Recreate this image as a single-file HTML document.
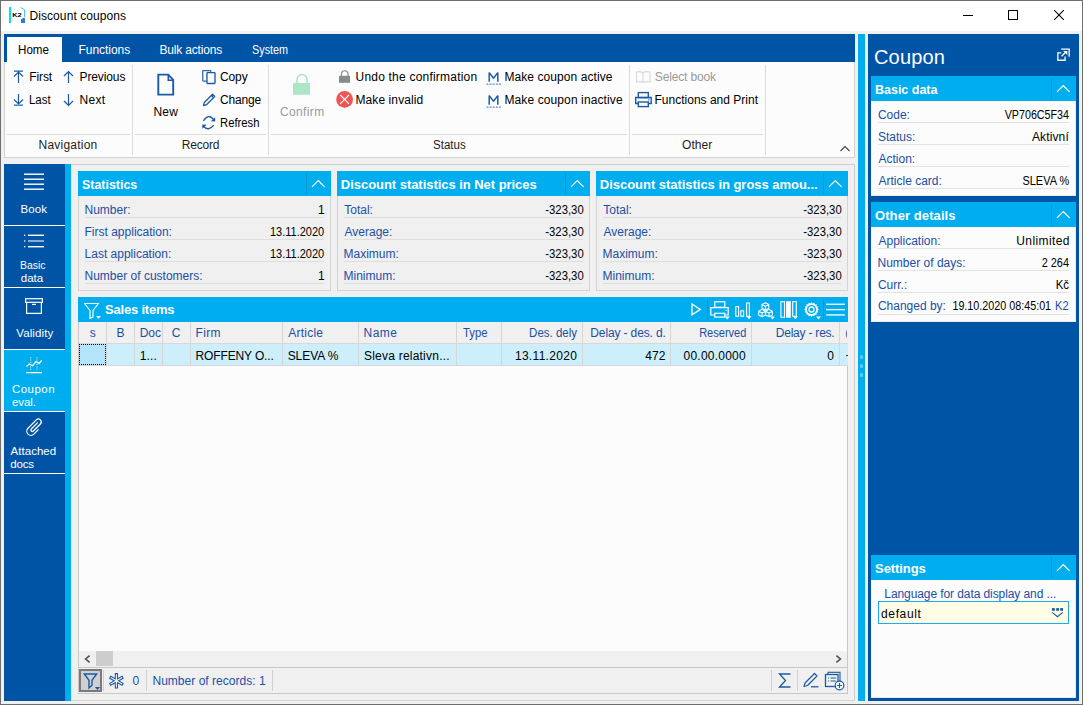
<!DOCTYPE html>
<html><head><meta charset="utf-8"><title>Discount coupons</title>
<style>
html,body{margin:0;padding:0;width:1083px;height:705px;overflow:hidden;background:#f0f0f0;}
body{position:relative;font-family:"Liberation Sans",sans-serif;}
body>div,body>svg{position:absolute;}
.t{white-space:nowrap;}
</style></head><body>
<div style="left:0px;top:0px;width:1083px;height:705px;background:#f0f0f0;"></div>
<div style="left:1px;top:1px;width:1081px;height:30px;background:#ffffff;"></div>
<div style="left:0px;top:0px;width:1083px;height:1px;background:#6e6e6e;"></div>
<div style="left:0px;top:704px;width:1083px;height:1px;background:#6e6e6e;"></div>
<div style="left:0px;top:0px;width:1px;height:705px;background:#6e6e6e;"></div>
<div style="left:1082px;top:0px;width:1px;height:705px;background:#6e6e6e;"></div>
<svg style="left:8px;top:6px;" width="20" height="20" viewBox="0 0 20 20"><rect x="1" y="1" width="2" height="16" fill="#00e4f2"/><text x="4.2" y="10.9" font-family="Liberation Sans" font-weight="700" font-size="6.2" fill="#000" textLength="9.4" lengthAdjust="spacingAndGlyphs">K2</text><path d="M12.5 1.5 L16.5 3.8 L16.5 11" stroke="#3ccbe6" stroke-width="1" fill="none"/><path d="M13 17 L13 13.5 Q15 11 17 12 L17 17 Z" fill="#2a7be0"/></svg>
<div class="t" style="left:29.44px;top:9.00px;font-size:12px;line-height:14px;font-weight:400;color:#000;letter-spacing:0.085px;">Discount coupons</div>
<div style="left:963px;top:15px;width:10px;height:1px;background:#000;"></div>
<div style="left:1008px;top:10px;width:10px;height:10px;border:1px solid #000;box-sizing:border-box;"></div>
<svg style="left:1053px;top:9px;" width="12" height="12" viewBox="0 0 12 12"><path d="M1.2 1.2 L10.8 10.8 M10.8 1.2 L1.2 10.8" stroke="#000" stroke-width="1.05"/></svg>
<div style="left:4px;top:34px;width:851px;height:28px;background:#0054a6;"></div>
<div style="left:7px;top:37px;width:55px;height:25px;background:#fcfcfc;"></div>
<div class="t" style="left:18.04px;top:43.00px;font-size:12px;line-height:14px;font-weight:400;color:#000;transform:scaleX(0.9678);transform-origin:left center;margin-left:0.03px;">Home</div>
<div class="t" style="left:78.54px;top:43.00px;font-size:12px;line-height:14px;font-weight:400;color:#fff;letter-spacing:-0.042px;">Functions</div>
<div class="t" style="left:159.44px;top:43.00px;font-size:12px;line-height:14px;font-weight:400;color:#fff;letter-spacing:-0.173px;">Bulk actions</div>
<div class="t" style="left:251.76px;top:43.00px;font-size:12px;line-height:14px;font-weight:400;color:#fff;transform:scaleX(0.9018);transform-origin:left center;margin-left:0.05px;">System</div>
<div style="left:4px;top:62px;width:851px;height:96px;background:#fcfcfc;border:1px solid #d2d2d2;border-top:none;box-sizing:border-box;"></div>
<div style="left:7px;top:134px;width:123px;height:1px;background:#dcdcdc;"></div>
<div style="left:135px;top:134px;width:131px;height:1px;background:#dcdcdc;"></div>
<div style="left:271px;top:134px;width:356px;height:1px;background:#dcdcdc;"></div>
<div style="left:632px;top:134px;width:131px;height:1px;background:#dcdcdc;"></div>
<div style="left:132px;top:65px;width:1px;height:90px;background:#dcdcdc;"></div>
<div style="left:268px;top:65px;width:1px;height:90px;background:#dcdcdc;"></div>
<div style="left:629px;top:65px;width:1px;height:90px;background:#dcdcdc;"></div>
<div style="left:765px;top:65px;width:1px;height:90px;background:#dcdcdc;"></div>
<div class="t" style="left:38.54px;top:137.70px;font-size:12px;line-height:14px;font-weight:400;color:#1e1e1e;letter-spacing:0.227px;">Navigation</div>
<div class="t" style="left:181.74px;top:137.60px;font-size:12px;line-height:14px;font-weight:400;color:#1e1e1e;letter-spacing:-0.212px;">Record</div>
<div class="t" style="left:432.66px;top:137.80px;font-size:12px;line-height:14px;font-weight:400;color:#1e1e1e;transform:scaleX(0.9619);transform-origin:left center;margin-left:0.02px;">Status</div>
<div class="t" style="left:682.06px;top:137.50px;font-size:12px;line-height:14px;font-weight:400;color:#1e1e1e;letter-spacing:0.030px;">Other</div>
<svg style="left:839px;top:143.5px;" width="12" height="9" viewBox="0 0 12 9"><path d="M1.5 7 L6 2.5 L10.5 7" stroke="#444" stroke-width="1.1" fill="none"/></svg>
<svg style="left:13px;top:70px;" width="11" height="14" viewBox="0 0 11 14"><path d="M1 1.2 H10 M5.5 2.5 V13 M1 6.5 L5.5 2 L10 6.5" stroke="#1c5aa6" stroke-width="1.2" fill="none"/></svg>
<svg style="left:63px;top:70px;" width="11" height="14" viewBox="0 0 11 14"><path d="M5.5 1.5 V13 M1 6 L5.5 1.5 L10 6" stroke="#1c5aa6" stroke-width="1.2" fill="none"/></svg>
<svg style="left:13px;top:93px;" width="11" height="14" viewBox="0 0 11 14"><path d="M5.5 1 V11 M1 6.5 L5.5 11 L10 6.5" stroke="#1c5aa6" stroke-width="1.2" fill="none"/><path d="M1 12.2 H10" stroke="#4f86c6" stroke-width="1.6"/></svg>
<svg style="left:63px;top:93px;" width="11" height="14" viewBox="0 0 11 14"><path d="M5.5 1 V12.5 M1 8 L5.5 12.5 L10 8" stroke="#1c5aa6" stroke-width="1.2" fill="none"/></svg>
<div class="t" style="left:29.34px;top:70.00px;font-size:12px;line-height:14px;font-weight:400;color:#000;letter-spacing:-0.140px;">First</div>
<div class="t" style="left:79.54px;top:70.00px;font-size:12px;line-height:14px;font-weight:400;color:#000;letter-spacing:-0.114px;">Previous</div>
<div class="t" style="left:29.34px;top:93.00px;font-size:12px;line-height:14px;font-weight:400;color:#000;transform:scaleX(0.9537);transform-origin:left center;margin-left:0.04px;">Last</div>
<div class="t" style="left:79.54px;top:93.00px;font-size:12px;line-height:14px;font-weight:400;color:#000;letter-spacing:0.253px;">Next</div>
<svg style="left:156px;top:73px;" width="20" height="24" viewBox="0 0 20 24"><path d="M2.3 1.6 H12.2 L17.2 6.8 V21.6 H2.3 Z" stroke="#1c5aa6" stroke-width="1.9" fill="none" stroke-linejoin="miter"/><path d="M12.3 2 V7.2 H17" stroke="#1c5aa6" stroke-width="1.6" fill="none"/></svg>
<div class="t" style="left:153.44px;top:104.60px;font-size:12px;line-height:14px;font-weight:400;color:#000;letter-spacing:0.250px;">New</div>
<svg style="left:201px;top:69px;" width="16" height="16" viewBox="0 0 16 16"><rect x="1.75" y="1.55" width="8" height="10.5" rx="0.5" stroke="#1c5aa6" stroke-width="1.3" fill="none" opacity="0.9"/><rect x="5.95" y="3.55" width="8.05" height="10.9" rx="0.6" stroke="#1c5aa6" stroke-width="1.35" fill="#fcfcfc"/></svg>
<div class="t" style="left:219.90px;top:70.00px;font-size:12px;line-height:14px;font-weight:400;color:#000;letter-spacing:-0.073px;">Copy</div>
<svg style="left:201px;top:92px;" width="16" height="16" viewBox="0 0 16 16"><path d="M2.5 13.5 L3.3 10.5 L11.5 2.3 L13.7 4.5 L5.5 12.7 Z M10.3 3.5 L12.5 5.7" stroke="#1c5aa6" stroke-width="1.3" fill="none" stroke-linejoin="round"/></svg>
<div class="t" style="left:219.90px;top:93.00px;font-size:12px;line-height:14px;font-weight:400;color:#000;letter-spacing:-0.132px;">Change</div>
<svg style="left:201px;top:115px;" width="16" height="16" viewBox="0 0 16 16"><path d="M2.3 5.9 Q7.5 -2.1 12.6 4.6" stroke="#1c5aa6" stroke-width="1.35" fill="none"/><path d="M14.2 2.2 L14.2 6.6 L9.8 6.3 Z" fill="#1c5aa6"/><path d="M12.7 10.1 Q7.5 16.8 2.4 11.3" stroke="#1c5aa6" stroke-width="1.35" fill="none"/><path d="M1.3 13.8 L1.3 9.4 L5.7 9.7 Z" fill="#1c5aa6"/></svg>
<div class="t" style="left:219.54px;top:116.00px;font-size:12px;line-height:14px;font-weight:400;color:#000;transform:scaleX(0.9389);transform-origin:left center;margin-left:0.06px;">Refresh</div>
<svg style="left:292px;top:73px;" width="20" height="24" viewBox="0 0 20 24"><path d="M5 10 V6.5 A5 5 0 0 1 15 6.5 V10" stroke="#ade5c7" stroke-width="1.6" fill="none"/><rect x="1" y="10" width="17" height="11.8" fill="#ade5c7"/></svg>
<div class="t" style="left:280.00px;top:105.00px;font-size:12px;line-height:14px;font-weight:400;color:#9a9a9a;letter-spacing:0.370px;">Confirm</div>
<svg style="left:338px;top:69px;" width="14" height="15" viewBox="0 0 14 15"><path d="M3.5 7 V4.5 A3.3 3.3 0 0 1 10 4.5 V7" stroke="#868b8b" stroke-width="1.2" fill="none"/><rect x="1" y="6.8" width="11" height="7" fill="#868b8b"/></svg>
<div class="t" style="left:355.50px;top:70.00px;font-size:12px;line-height:14px;font-weight:400;color:#000;letter-spacing:0.211px;">Undo the confirmation</div>
<svg style="left:335px;top:90px;" width="19" height="19" viewBox="0 0 19 19"><circle cx="9.6" cy="9.4" r="8.4" fill="#f05454"/><path d="M5.2 5 L14 13.8 M14 5 L5.2 13.8" stroke="#fff" stroke-width="1.1"/></svg>
<div class="t" style="left:355.44px;top:93.00px;font-size:12px;line-height:14px;font-weight:400;color:#000;letter-spacing:0.098px;">Make invalid</div>
<svg style="left:486px;top:70px;" width="16" height="16" viewBox="0 0 16 16"><path d="M3.2 11.8 V2.6 L7.5 8.3 L11.8 2.6 V11.8" stroke="#1c5aa6" stroke-width="1.5" fill="none" stroke-linejoin="bevel"/><rect x="0.5" y="13.5" width="2" height="1.3" fill="#5b8fd0"/><rect x="3.6" y="13.5" width="2" height="1.3" fill="#5b8fd0"/><rect x="6.7" y="13.5" width="2" height="1.3" fill="#5b8fd0"/><rect x="9.8" y="13.5" width="2" height="1.3" fill="#5b8fd0"/><rect x="12.9" y="13.5" width="2" height="1.3" fill="#5b8fd0"/></svg>
<svg style="left:486px;top:93px;" width="16" height="16" viewBox="0 0 16 16"><path d="M3.2 11.8 V2.6 L7.5 8.3 L11.8 2.6 V11.8" stroke="#1c5aa6" stroke-width="1.5" fill="none" stroke-linejoin="bevel"/><rect x="0.5" y="13.5" width="2" height="1.3" fill="#5b8fd0"/><rect x="3.6" y="13.5" width="2" height="1.3" fill="#5b8fd0"/><rect x="6.7" y="13.5" width="2" height="1.3" fill="#5b8fd0"/><rect x="9.8" y="13.5" width="2" height="1.3" fill="#5b8fd0"/><rect x="12.9" y="13.5" width="2" height="1.3" fill="#5b8fd0"/></svg>
<div class="t" style="left:504.44px;top:70.00px;font-size:12px;line-height:14px;font-weight:400;color:#000;letter-spacing:0.080px;">Make coupon active</div>
<div class="t" style="left:504.44px;top:93.00px;font-size:12px;line-height:14px;font-weight:400;color:#000;letter-spacing:0.108px;">Make coupon inactive</div>
<svg style="left:635px;top:70px;" width="17" height="14" viewBox="0 0 17 14"><path d="M1.5 2 Q4.5 1 8 2.5 Q11.5 1 15 2 V12 Q11.5 11 8 12.5 Q4.5 11 1.5 12 Z M8 2.5 V12.5" stroke="#d9d9d9" stroke-width="1.1" fill="none"/></svg>
<div class="t" style="left:654.86px;top:70.00px;font-size:12px;line-height:14px;font-weight:400;color:#9a9a9a;letter-spacing:-0.156px;">Select book</div>
<svg style="left:634px;top:91px;" width="19" height="17" viewBox="0 0 19 17"><rect x="4.3" y="1.6" width="10" height="5" stroke="#1c5aa6" stroke-width="1.4" fill="none"/><path d="M4 12.5 H1.7 V6.5 H17.2 V12.5 H15" stroke="#1c5aa6" stroke-width="1.4" fill="none"/><rect x="4.3" y="11" width="10" height="4.6" stroke="#1c5aa6" stroke-width="1.4" fill="#fcfcfc"/><rect x="14.2" y="8.3" width="1.2" height="1.2" fill="#1c5aa6"/></svg>
<div class="t" style="left:654.44px;top:93.00px;font-size:12px;line-height:14px;font-weight:400;color:#000;letter-spacing:0.013px;">Functions and Print</div>
<div style="left:858px;top:34px;width:7px;height:667px;background:#00aeef;"></div>
<div style="left:860px;top:355.3px;width:3.4px;height:3.4px;border-radius:50%;background:#5fcdf5;"></div>
<div style="left:860px;top:364.3px;width:3.4px;height:3.4px;border-radius:50%;background:#5fcdf5;"></div>
<div style="left:860px;top:373.3px;width:3.4px;height:3.4px;border-radius:50%;background:#5fcdf5;"></div>
<div style="left:868px;top:34px;width:211px;height:667px;background:#0054a6;"></div>
<div class="t" style="left:874.00px;top:46.00px;font-size:20px;line-height:22px;font-weight:400;color:#fff;letter-spacing:0.160px;">Coupon</div>
<svg style="left:1052px;top:44px;" width="22" height="22" viewBox="0 0 22 22"><path d="M9.2 8.95 H5.85 V16.25 H13.1 V12.6" stroke="#fff" stroke-width="1.3" fill="none"/><path d="M9.2 5.15 H17.15 V12.8" stroke="#fff" stroke-width="1.3" fill="none"/><path d="M9.6 12.3 L13.6 8.3" stroke="#fff" stroke-width="1.3"/><path d="M11.2 6.9 H15.3 V11 Z" fill="#fff"/></svg>
<div style="left:871px;top:76px;width:205px;height:25px;background:#00aeef;"></div>
<div style="left:1051px;top:78px;width:1px;height:21px;background:#0b97d0;"></div>
<svg style="left:1056px;top:84px;" width="15" height="9" viewBox="0 0 15 9"><path d="M1 7.8 L7.3 1.5 L13.6 7.8" stroke="#fff" stroke-width="1.2" fill="none"/></svg>
<div class="t" style="left:874.65px;top:81.80px;font-size:13px;line-height:15px;font-weight:700;color:#fff;transform:scaleX(0.9598);transform-origin:left center;margin-left:0.03px;">Basic data</div>
<div style="left:871px;top:101px;width:205px;height:95px;background:#fcfcfc;border-right:1px solid #ebebeb;border-bottom:1px solid #ebebeb;box-sizing:border-box;"></div>
<div class="t" style="left:877.90px;top:108.00px;font-size:12px;line-height:14px;font-weight:400;color:#1b4fa5;">Code:</div>
<div class="t" style="right:13.96px;top:108.00px;font-size:12px;line-height:14px;font-weight:400;color:#000;text-align:right;transform:scaleX(0.8934);transform-origin:right center;margin-right:0.04px;">VP706C5F34</div>
<div style="left:878px;top:122px;width:191px;height:1px;background:#e3e3e3;"></div>
<div class="t" style="left:877.96px;top:130.00px;font-size:12px;line-height:14px;font-weight:400;color:#1b4fa5;">Status:</div>
<div class="t" style="right:14.17px;top:130.00px;font-size:12px;line-height:14px;font-weight:400;color:#000;text-align:right;letter-spacing:0.117px;">Aktivní</div>
<div style="left:878px;top:144px;width:191px;height:1px;background:#e3e3e3;"></div>
<div class="t" style="left:878.50px;top:152.00px;font-size:12px;line-height:14px;font-weight:400;color:#1b4fa5;">Action:</div>
<div style="left:878px;top:166px;width:191px;height:1px;background:#e3e3e3;"></div>
<div class="t" style="left:878.50px;top:174.00px;font-size:12px;line-height:14px;font-weight:400;color:#1b4fa5;">Article card:</div>
<div class="t" style="right:13.92px;top:174.00px;font-size:12px;line-height:14px;font-weight:400;color:#000;text-align:right;transform:scaleX(0.9140);transform-origin:right center;margin-right:0.03px;">SLEVA %</div>
<div style="left:878px;top:188px;width:191px;height:1px;background:#e3e3e3;"></div>
<div style="left:871px;top:202px;width:205px;height:25px;background:#00aeef;"></div>
<div style="left:1051px;top:204px;width:1px;height:21px;background:#0b97d0;"></div>
<svg style="left:1056px;top:210px;" width="15" height="9" viewBox="0 0 15 9"><path d="M1 7.8 L7.3 1.5 L13.6 7.8" stroke="#fff" stroke-width="1.2" fill="none"/></svg>
<div class="t" style="left:874.98px;top:207.80px;font-size:13px;line-height:15px;font-weight:700;color:#fff;letter-spacing:0.092px;">Other details</div>
<div style="left:871px;top:227px;width:205px;height:95px;background:#fcfcfc;border-right:1px solid #ebebeb;border-bottom:1px solid #ebebeb;box-sizing:border-box;"></div>
<div class="t" style="left:878.50px;top:234.00px;font-size:12px;line-height:14px;font-weight:400;color:#1b4fa5;">Application:</div>
<div class="t" style="right:13.20px;top:234.00px;font-size:12px;line-height:14px;font-weight:400;color:#000;text-align:right;letter-spacing:0.388px;">Unlimited</div>
<div style="left:878px;top:248px;width:191px;height:1px;background:#e3e3e3;"></div>
<div class="t" style="left:877.54px;top:255.80px;font-size:12px;line-height:14px;font-weight:400;color:#1b4fa5;">Number of days:</div>
<div class="t" style="right:14.01px;top:255.80px;font-size:12px;line-height:14px;font-weight:400;color:#000;text-align:right;transform:scaleX(0.9125);transform-origin:right center;margin-right:0.03px;">2 264</div>
<div style="left:878px;top:270px;width:191px;height:1px;background:#e3e3e3;"></div>
<div class="t" style="left:877.90px;top:277.60px;font-size:12px;line-height:14px;font-weight:400;color:#1b4fa5;">Curr.:</div>
<div class="t" style="right:14.08px;top:277.60px;font-size:12px;line-height:14px;font-weight:400;color:#000;text-align:right;transform:scaleX(0.9513);transform-origin:right center;margin-right:0.02px;">Kč</div>
<div style="left:878px;top:292px;width:191px;height:1px;background:#e3e3e3;"></div>
<div class="t" style="left:877.90px;top:299.40px;font-size:12px;line-height:14px;font-weight:400;color:#1b4fa5;">Changed by:</div>
<div style="left:878px;top:314px;width:191px;height:1px;background:#e3e3e3;"></div>
<div class="t" style="right:14.76px;top:299.40px;font-size:12px;line-height:14px;font-weight:400;color:#1b4fa5;text-align:right;transform:scaleX(0.9251);transform-origin:right center;margin-right:0.05px;">K2</div>
<div class="t" style="right:31.77px;top:299.40px;font-size:12px;line-height:14px;font-weight:400;color:#000;text-align:right;transform:scaleX(0.8964);transform-origin:right center;margin-right:0.06px;">19.10.2020 08:45:01</div>
<div style="left:871px;top:555px;width:205px;height:25px;background:#00aeef;"></div>
<div style="left:1051px;top:557px;width:1px;height:21px;background:#0b97d0;"></div>
<svg style="left:1056px;top:563px;" width="15" height="9" viewBox="0 0 15 9"><path d="M1 7.8 L7.3 1.5 L13.6 7.8" stroke="#fff" stroke-width="1.2" fill="none"/></svg>
<div class="t" style="left:875.11px;top:560.80px;font-size:13px;line-height:15px;font-weight:700;color:#fff;letter-spacing:-0.082px;">Settings</div>
<div style="left:871px;top:580px;width:205px;height:118px;background:#fcfcfc;border-right:1px solid #ebebeb;border-bottom:1px solid #ebebeb;box-sizing:border-box;"></div>
<div class="t" style="left:884.34px;top:587.00px;font-size:12px;line-height:14px;font-weight:400;color:#1b4fa5;letter-spacing:-0.086px;">Language for data display and ...</div>
<div style="left:878px;top:601px;width:191px;height:23px;background:#fffde6;border:1px solid #1eaaf0;box-sizing:border-box;"></div>
<div class="t" style="left:881.02px;top:606.70px;font-size:12px;line-height:14px;font-weight:400;color:#000;letter-spacing:0.640px;">default</div>
<svg style="left:1050px;top:606px;" width="15" height="13" viewBox="0 0 15 13"><rect x="2" y="2.1" width="2.8" height="2.7" fill="#1c5aa6"/><rect x="6.2" y="2.1" width="2.8" height="2.7" fill="#1c5aa6"/><rect x="10.2" y="2.1" width="2.8" height="2.7" fill="#1c5aa6"/><path d="M2.2 6.4 L7.5 10.8 L12.8 6.4" stroke="#1c5aa6" stroke-width="1.2" fill="none"/></svg>
<div style="left:4px;top:164px;width:61px;height:537px;background:#0054a6;"></div>
<div style="left:65px;top:164px;width:6px;height:537px;background:#00aeef;"></div>
<div style="left:4px;top:350px;width:67px;height:61px;background:#00aeef;"></div>
<div style="left:4px;top:225px;width:61px;height:1px;background:#fff;"></div>
<div style="left:4px;top:287px;width:61px;height:1px;background:#fff;"></div>
<div style="left:4px;top:349px;width:61px;height:1px;background:#fff;"></div>
<div style="left:4px;top:411px;width:61px;height:1px;background:#fff;"></div>
<div style="left:4px;top:473px;width:61px;height:1px;background:#fff;"></div>
<svg style="left:23px;top:172px;" width="22" height="20" viewBox="0 0 22 20"><rect x="1" y="1.5" width="20" height="1.4" fill="#fff"/><rect x="1" y="6.5" width="20" height="1.4" fill="#fff"/><rect x="1" y="11.5" width="20" height="1.4" fill="#fff"/><rect x="1" y="16.5" width="20" height="1.4" fill="#fff"/></svg>
<div class="t" style="left:20.48px;top:202.60px;font-size:11.5px;line-height:12px;font-weight:400;color:#fff;letter-spacing:0.100px;">Book</div>
<svg style="left:23px;top:233px;" width="22" height="16" viewBox="0 0 22 16"><rect x="1" y="1.6" width="1.3" height="1.3" fill="#fff"/><rect x="5" y="1.6" width="16" height="1.4" fill="#fff" opacity="1"/><rect x="1" y="7.300000000000001" width="1.3" height="1.3" fill="#fff"/><rect x="5" y="7.300000000000001" width="16" height="1.4" fill="#fff" opacity="0.75"/><rect x="1" y="13.0" width="1.3" height="1.3" fill="#fff"/><rect x="5" y="13.0" width="16" height="1.4" fill="#fff" opacity="1"/></svg>
<div class="t" style="left:19.68px;top:259.00px;font-size:11.5px;line-height:12px;font-weight:400;color:#fff;transform:scaleX(0.9104);transform-origin:left center;margin-left:0.08px;">Basic</div>
<div class="t" style="left:20.84px;top:271.50px;font-size:11.5px;line-height:12px;font-weight:400;color:#fff;">data</div>
<svg style="left:23px;top:296px;" width="22" height="20" viewBox="0 0 22 20"><rect x="2.6" y="2.7" width="16.8" height="3.6" stroke="#fff" stroke-width="1.2" fill="none"/><path d="M3.6 6.3 V17.3 H18.4 V6.3" stroke="#fff" stroke-width="1.2" fill="none"/><rect x="9" y="7.8" width="4" height="1.2" fill="#fff"/></svg>
<div class="t" style="left:16.24px;top:326.70px;font-size:11.5px;line-height:12px;font-weight:400;color:#fff;letter-spacing:0.105px;">Validity</div>
<svg style="left:20px;top:352px;" width="28" height="26" viewBox="0 0 28 26"><path d="M10.7 5.2 V18.8 M17 5.2 V18.8" stroke="#fff" stroke-width="1.1" stroke-dasharray="1 1.3" fill="none" opacity="0.85"/><path d="M6.5 14.5 L9.3 12 L12.5 13.8 L16 9.5 L19 11.5 L21.7 8.3" stroke="#fff" stroke-width="1.3" fill="none" stroke-linejoin="round"/><path d="M6.2 20.6 H22" stroke="#fff" stroke-width="1.3"/></svg>
<div class="t" style="left:11.93px;top:382.60px;font-size:11.5px;line-height:12px;font-weight:400;color:#fff;letter-spacing:0.475px;">Coupon</div>
<div class="t" style="left:12.04px;top:395.60px;font-size:11.5px;line-height:12px;font-weight:400;color:#fff;letter-spacing:-0.067px;">eval.</div>
<svg style="left:20px;top:410px;" width="28" height="30" viewBox="0 0 28 30"><g transform="translate(14.3 17.2) scale(0.9) translate(-14.3 -17.2)"><path d="M18.61 20.06 L13.80 24.87 A4.60 4.60 0 0 1 7.29 18.37 L16.56 9.10 A3.20 3.20 0 0 1 21.08 13.63 L13.23 21.48 A1.60 1.60 0 0 1 10.97 19.21 L17.76 12.43" stroke="#fff" fill="none" stroke-linecap="round" stroke-width="1.35"/></g></svg>
<div class="t" style="left:10.60px;top:445.00px;font-size:11.5px;line-height:12px;font-weight:400;color:#fff;letter-spacing:0.026px;">Attached</div>
<div class="t" style="left:10.14px;top:457.50px;font-size:11.5px;line-height:12px;font-weight:400;color:#fff;letter-spacing:-0.134px;">docs</div>
<div style="left:71px;top:164px;width:784px;height:537px;background:#f0f0f0;border-top:1px solid #cdcdcd;border-right:1px solid #cdcdcd;border-bottom:1px solid #d4d4d4;box-sizing:border-box;"></div>
<div style="left:78px;top:171px;width:253px;height:25px;background:#00aeef;"></div>
<div style="left:306px;top:173px;width:1px;height:21px;background:#0b97d0;"></div>
<svg style="left:311px;top:179px;" width="15" height="9" viewBox="0 0 15 9"><path d="M1 7.8 L7.3 1.5 L13.6 7.8" stroke="#fff" stroke-width="1.2" fill="none"/></svg>
<div class="t" style="left:82.31px;top:177.00px;font-size:13px;line-height:15px;font-weight:700;color:#fff;transform:scaleX(0.9547);transform-origin:left center;margin-left:0.02px;">Statistics</div>
<div style="left:78px;top:196px;width:253px;height:95px;background:#f0f0f0;border:1px solid #d4d4d4;border-top:none;box-sizing:border-box;"></div>
<div class="t" style="left:84.54px;top:202.50px;font-size:12px;line-height:14px;font-weight:400;color:#1b4fa5;">Number:</div>
<div class="t" style="right:758.45px;top:202.50px;font-size:12px;line-height:14px;font-weight:400;color:#000;text-align:right;">1</div>
<div style="left:85px;top:217px;width:239px;height:1px;background:#dedede;"></div>
<div class="t" style="left:84.54px;top:224.50px;font-size:12px;line-height:14px;font-weight:400;color:#1b4fa5;">First application:</div>
<div class="t" style="right:758.58px;top:224.50px;font-size:12px;line-height:14px;font-weight:400;color:#000;text-align:right;transform:scaleX(0.9163);transform-origin:right center;margin-right:0.04px;">13.11.2020</div>
<div style="left:85px;top:239px;width:239px;height:1px;background:#dedede;"></div>
<div class="t" style="left:84.54px;top:246.50px;font-size:12px;line-height:14px;font-weight:400;color:#1b4fa5;">Last application:</div>
<div class="t" style="right:758.58px;top:246.50px;font-size:12px;line-height:14px;font-weight:400;color:#000;text-align:right;transform:scaleX(0.9163);transform-origin:right center;margin-right:0.04px;">13.11.2020</div>
<div style="left:85px;top:261px;width:239px;height:1px;background:#dedede;"></div>
<div class="t" style="left:84.54px;top:268.50px;font-size:12px;line-height:14px;font-weight:400;color:#1b4fa5;">Number of customers:</div>
<div class="t" style="right:758.45px;top:268.50px;font-size:12px;line-height:14px;font-weight:400;color:#000;text-align:right;">1</div>
<div style="left:85px;top:283px;width:239px;height:1px;background:#dedede;"></div>
<div style="left:337px;top:171px;width:253px;height:25px;background:#00aeef;"></div>
<div style="left:565px;top:173px;width:1px;height:21px;background:#0b97d0;"></div>
<svg style="left:570px;top:179px;" width="15" height="9" viewBox="0 0 15 9"><path d="M1 7.8 L7.3 1.5 L13.6 7.8" stroke="#fff" stroke-width="1.2" fill="none"/></svg>
<div class="t" style="left:340.85px;top:177.00px;font-size:13px;line-height:15px;font-weight:700;color:#fff;letter-spacing:-0.042px;">Discount statistics in Net prices</div>
<div style="left:337px;top:196px;width:253px;height:95px;background:#f0f0f0;border:1px solid #d4d4d4;border-top:none;box-sizing:border-box;"></div>
<div class="t" style="left:344.26px;top:202.50px;font-size:12px;line-height:14px;font-weight:400;color:#1b4fa5;">Total:</div>
<div class="t" style="right:499.57px;top:202.50px;font-size:12px;line-height:14px;font-weight:400;color:#000;text-align:right;transform:scaleX(0.9441);transform-origin:right center;margin-right:0.02px;">-323,30</div>
<div style="left:344px;top:217px;width:239px;height:1px;background:#dedede;"></div>
<div class="t" style="left:344.50px;top:224.50px;font-size:12px;line-height:14px;font-weight:400;color:#1b4fa5;">Average:</div>
<div class="t" style="right:499.57px;top:224.50px;font-size:12px;line-height:14px;font-weight:400;color:#000;text-align:right;transform:scaleX(0.9441);transform-origin:right center;margin-right:0.02px;">-323,30</div>
<div style="left:344px;top:239px;width:239px;height:1px;background:#dedede;"></div>
<div class="t" style="left:343.54px;top:246.50px;font-size:12px;line-height:14px;font-weight:400;color:#1b4fa5;">Maximum:</div>
<div class="t" style="right:499.57px;top:246.50px;font-size:12px;line-height:14px;font-weight:400;color:#000;text-align:right;transform:scaleX(0.9441);transform-origin:right center;margin-right:0.02px;">-323,30</div>
<div style="left:344px;top:261px;width:239px;height:1px;background:#dedede;"></div>
<div class="t" style="left:343.54px;top:268.50px;font-size:12px;line-height:14px;font-weight:400;color:#1b4fa5;">Minimum:</div>
<div class="t" style="right:499.57px;top:268.50px;font-size:12px;line-height:14px;font-weight:400;color:#000;text-align:right;transform:scaleX(0.9441);transform-origin:right center;margin-right:0.02px;">-323,30</div>
<div style="left:344px;top:283px;width:239px;height:1px;background:#dedede;"></div>
<div style="left:596px;top:171px;width:252px;height:25px;background:#00aeef;"></div>
<div style="left:823px;top:173px;width:1px;height:21px;background:#0b97d0;"></div>
<svg style="left:828px;top:179px;" width="15" height="9" viewBox="0 0 15 9"><path d="M1 7.8 L7.3 1.5 L13.6 7.8" stroke="#fff" stroke-width="1.2" fill="none"/></svg>
<div class="t" style="left:599.86px;top:177.00px;font-size:13px;line-height:15px;font-weight:700;color:#fff;letter-spacing:-0.033px;">Discount statistics in gross amou...</div>
<div style="left:596px;top:196px;width:252px;height:95px;background:#f0f0f0;border:1px solid #d4d4d4;border-top:none;box-sizing:border-box;"></div>
<div class="t" style="left:603.26px;top:202.50px;font-size:12px;line-height:14px;font-weight:400;color:#1b4fa5;">Total:</div>
<div class="t" style="right:241.57px;top:202.50px;font-size:12px;line-height:14px;font-weight:400;color:#000;text-align:right;transform:scaleX(0.9441);transform-origin:right center;margin-right:0.02px;">-323,30</div>
<div style="left:603px;top:217px;width:238px;height:1px;background:#dedede;"></div>
<div class="t" style="left:603.50px;top:224.50px;font-size:12px;line-height:14px;font-weight:400;color:#1b4fa5;">Average:</div>
<div class="t" style="right:241.57px;top:224.50px;font-size:12px;line-height:14px;font-weight:400;color:#000;text-align:right;transform:scaleX(0.9441);transform-origin:right center;margin-right:0.02px;">-323,30</div>
<div style="left:603px;top:239px;width:238px;height:1px;background:#dedede;"></div>
<div class="t" style="left:602.54px;top:246.50px;font-size:12px;line-height:14px;font-weight:400;color:#1b4fa5;">Maximum:</div>
<div class="t" style="right:241.57px;top:246.50px;font-size:12px;line-height:14px;font-weight:400;color:#000;text-align:right;transform:scaleX(0.9441);transform-origin:right center;margin-right:0.02px;">-323,30</div>
<div style="left:603px;top:261px;width:238px;height:1px;background:#dedede;"></div>
<div class="t" style="left:602.54px;top:268.50px;font-size:12px;line-height:14px;font-weight:400;color:#1b4fa5;">Minimum:</div>
<div class="t" style="right:241.57px;top:268.50px;font-size:12px;line-height:14px;font-weight:400;color:#000;text-align:right;transform:scaleX(0.9441);transform-origin:right center;margin-right:0.02px;">-323,30</div>
<div style="left:603px;top:283px;width:238px;height:1px;background:#dedede;"></div>
<div style="left:78px;top:297px;width:770px;height:25px;background:#00aeef;"></div>
<svg style="left:83px;top:302px;" width="19" height="18" viewBox="0 0 19 18"><path d="M1.5 1.5 H15.5 L10 8.5 V15 L7 16.5 V8.5 Z" stroke="#fff" stroke-width="1.2" fill="none" stroke-linejoin="round"/><path d="M13 14 H18 L15.5 16.8 Z" fill="#fff"/></svg>
<div class="t" style="left:105.11px;top:302.40px;font-size:13px;line-height:15px;font-weight:700;color:#fff;letter-spacing:-0.209px;">Sales items</div>
<svg style="left:0px;top:0px;pointer-events:none;" width="1083" height="705" viewBox="0 0 1083 705"><path d="M692 304 L700.3 309.4 L692 314.8 Z" stroke="#fff" stroke-width="1.3" fill="none" stroke-linejoin="miter"/><rect x="714.8" y="301.8" width="10" height="5.5" stroke="#fff" stroke-width="1.2" fill="none"/><path d="M714.5 315 H710.8 V307.6 H728.2 V315 H725" stroke="#fff" stroke-width="1.2" fill="none"/><rect x="714.8" y="313.3" width="10" height="3.8" stroke="#fff" stroke-width="1.2" fill="#00aeef"/><rect x="725.6" y="309.8" width="1.3" height="1" fill="#fff"/><path d="M724.8 316.4 H729.8 L727.3 319.4 Z" fill="#fff"/><rect x="735.8" y="306.6" width="2.8" height="9.6" stroke="#fff" stroke-width="1.1" fill="none"/><rect x="740.8" y="310.8" width="2.8" height="5.4" stroke="#fff" stroke-width="1.1" fill="none"/><rect x="746.6" y="303" width="2.8" height="13.2" stroke="#fff" stroke-width="1.1" fill="none"/><path d="M746.5 316.3 H751.5 L749.0 319.3 Z" fill="#fff"/><path d="M765.4 302.7 L768.8 304.5 V308.3 L765.4 310.1 L762.0 308.3 V304.5 Z M762.0 304.5 L765.4 306.3 L768.8 304.5 M765.4 306.3 V310.1" stroke="#fff" stroke-width="1.05" fill="#00aeef" stroke-linejoin="round"/><path d="M762 309.4 L765.4 311.2 V315 L762 316.8 L758.6 315 V311.2 Z M758.6 311.2 L762 313 L765.4 311.2 M762 313 V316.8" stroke="#fff" stroke-width="1.05" fill="#00aeef" stroke-linejoin="round"/><path d="M769 309.4 L772.4 311.2 V315 L769 316.8 L765.6 315 V311.2 Z M765.6 311.2 L769 313 L772.4 311.2 M769 313 V316.8" stroke="#fff" stroke-width="1.05" fill="#00aeef" stroke-linejoin="round"/><path d="M770 316.4 H775 L772.5 319.4 Z" fill="#fff"/><rect x="780.9" y="301.7" width="3.6" height="15.5" stroke="#fff" stroke-width="1.1" fill="none"/><rect x="786.1" y="301.2" width="4.7" height="16.5" fill="#fff"/><rect x="792.7" y="301.7" width="3.6" height="14.6" stroke="#fff" stroke-width="1.1" fill="none"/><path d="M792.8 316.3 H797.8 L795.3 319.3 Z" fill="#fff"/><polygon points="818.80,309.50 817.38,310.67 818.24,312.29 816.49,312.83 816.66,314.66 814.83,314.49 814.29,316.24 812.67,315.38 811.50,316.80 810.33,315.38 808.71,316.24 808.17,314.49 806.34,314.66 806.51,312.83 804.76,312.29 805.62,310.67 804.20,309.50 805.62,308.33 804.76,306.71 806.51,306.17 806.34,304.34 808.17,304.51 808.71,302.76 810.33,303.62 811.50,302.20 812.67,303.62 814.29,302.76 814.83,304.51 816.66,304.34 816.49,306.17 818.24,306.71 817.38,308.33" fill="#fff"/><circle cx="811.5" cy="309.5" r="4.6" fill="#00aeef"/><circle cx="811.5" cy="309.5" r="2.5" stroke="#fff" stroke-width="1.3" fill="none"/><path d="M816 316.4 H821 L818.5 319.4 Z" fill="#fff"/><rect x="826.1" y="303.60" width="18.8" height="1.3" fill="#fff"/><rect x="826.1" y="308.95" width="18.8" height="1.3" fill="#fff"/><rect x="826.1" y="314.30" width="18.8" height="1.3" fill="#fff"/></svg>
<div style="left:707px;top:299px;width:1px;height:21px;background:#0b95cf;"></div>
<div style="left:823px;top:299px;width:1px;height:21px;background:#0b95cf;"></div>
<div style="left:78px;top:322px;width:770px;height:22px;background:#f0f0f0;border-bottom:1px solid #d8d8d8;box-sizing:border-box;"></div>
<div style="left:78px;top:344px;width:770px;height:22px;background:#cdeffc;border-bottom:1px solid #d8d8d8;box-sizing:border-box;"></div>
<div style="left:79px;top:344px;width:27px;height:21px;background:#b5e5fa;border:1px dotted #000;box-sizing:border-box;"></div>
<div class="t" style="left:845.28px;top:326.00px;font-size:12px;line-height:14px;font-weight:400;color:#1b4fa5;width:2px;overflow:hidden;">(</div>
<div style="left:846px;top:355px;width:2px;height:1px;background:#333;"></div>
<div style="left:106px;top:322px;width:1px;height:44px;background:#d6d6d6;"></div>
<div style="left:134px;top:322px;width:1px;height:44px;background:#d6d6d6;"></div>
<div style="left:162px;top:322px;width:1px;height:44px;background:#d6d6d6;"></div>
<div style="left:190px;top:322px;width:1px;height:44px;background:#d6d6d6;"></div>
<div style="left:282px;top:322px;width:1px;height:44px;background:#d6d6d6;"></div>
<div style="left:358px;top:322px;width:1px;height:44px;background:#d6d6d6;"></div>
<div style="left:456px;top:322px;width:1px;height:44px;background:#d6d6d6;"></div>
<div style="left:501px;top:322px;width:1px;height:44px;background:#d6d6d6;"></div>
<div style="left:582px;top:322px;width:1px;height:44px;background:#d6d6d6;"></div>
<div style="left:670px;top:322px;width:1px;height:44px;background:#d6d6d6;"></div>
<div style="left:751px;top:322px;width:1px;height:44px;background:#d6d6d6;"></div>
<div style="left:839px;top:322px;width:1px;height:44px;background:#d6d6d6;"></div>
<div class="t" style="left:89.64px;top:326.00px;font-size:12px;line-height:14px;font-weight:400;color:#1b4fa5;">s</div>
<div class="t" style="left:116.54px;top:326.00px;font-size:12px;line-height:14px;font-weight:400;color:#1b4fa5;">B</div>
<div class="t" style="left:139.64px;top:326.00px;font-size:12px;line-height:14px;font-weight:400;color:#1b4fa5;width:21.6px;overflow:hidden;">Docu</div>
<div class="t" style="left:171.80px;top:326.00px;font-size:12px;line-height:14px;font-weight:400;color:#1b4fa5;">C</div>
<div class="t" style="left:195.54px;top:326.00px;font-size:12px;line-height:14px;font-weight:400;color:#1b4fa5;letter-spacing:0.313px;">Firm</div>
<div class="t" style="left:288.20px;top:326.00px;font-size:12px;line-height:14px;font-weight:400;color:#1b4fa5;letter-spacing:0.240px;">Article</div>
<div class="t" style="left:363.54px;top:326.00px;font-size:12px;line-height:14px;font-weight:400;color:#1b4fa5;letter-spacing:0.440px;">Name</div>
<div class="t" style="left:462.96px;top:326.00px;font-size:12px;line-height:14px;font-weight:400;color:#1b4fa5;transform:scaleX(0.9405);transform-origin:left center;margin-left:0.01px;">Type</div>
<div class="t" style="right:506.02px;top:326.00px;font-size:12px;line-height:14px;font-weight:400;color:#1b4fa5;text-align:right;transform:scaleX(0.9576);transform-origin:right center;margin-right:-0.00px;">Des. dely</div>
<div class="t" style="right:417.33px;top:326.00px;font-size:12px;line-height:14px;font-weight:400;color:#1b4fa5;text-align:right;letter-spacing:-0.136px;">Delay - des. d.</div>
<div class="t" style="right:336.93px;top:326.00px;font-size:12px;line-height:14px;font-weight:400;color:#1b4fa5;text-align:right;transform:scaleX(0.9190);transform-origin:right center;margin-right:0.06px;">Reserved</div>
<div class="t" style="right:248.51px;top:326.00px;font-size:12px;line-height:14px;font-weight:400;color:#1b4fa5;text-align:right;letter-spacing:-0.216px;">Delay - res.</div>
<div class="t" style="left:139.70px;top:349.00px;font-size:12px;line-height:14px;font-weight:400;color:#000;letter-spacing:0.120px;">1...</div>
<div class="t" style="left:195.54px;top:349.00px;font-size:12px;line-height:14px;font-weight:400;color:#000;letter-spacing:-0.136px;">ROFFENY O...</div>
<div class="t" style="left:287.66px;top:349.00px;font-size:12px;line-height:14px;font-weight:400;color:#000;letter-spacing:-0.053px;">SLEVA %</div>
<div class="t" style="left:363.96px;top:349.00px;font-size:12px;line-height:14px;font-weight:400;color:#000;letter-spacing:0.225px;">Sleva relativn...</div>
<div class="t" style="right:505.76px;top:349.00px;font-size:12px;line-height:14px;font-weight:400;color:#000;text-align:right;letter-spacing:0.318px;">13.11.2020</div>
<div class="t" style="right:417.66px;top:349.00px;font-size:12px;line-height:14px;font-weight:400;color:#000;text-align:right;">472</div>
<div class="t" style="right:337.05px;top:349.00px;font-size:12px;line-height:14px;font-weight:400;color:#000;text-align:right;letter-spacing:0.238px;">00.00.0000</div>
<div class="t" style="right:248.97px;top:349.00px;font-size:12px;line-height:14px;font-weight:400;color:#000;text-align:right;">0</div>
<div style="left:78px;top:366px;width:770px;height:285px;background:#fcfcfc;border-left:1px solid #c8c8c8;border-right:1px solid #c8c8c8;box-sizing:border-box;"></div>
<div style="left:78px;top:322px;width:1px;height:44px;background:#c8c8c8;"></div>
<div style="left:78px;top:651px;width:770px;height:17px;background:#f0f0f0;border:1px solid #c8c8c8;border-top:none;border-bottom:1px solid #c8c8c8;box-sizing:border-box;"></div>
<svg style="left:82px;top:652px;" width="10" height="14" viewBox="0 0 10 14"><path d="M7.6 3.6 L3.6 7 L7.6 10.4" stroke="#505050" stroke-width="1.6" fill="none"/></svg>
<div style="left:96px;top:651px;width:17px;height:15px;background:#cdcdcd;"></div>
<svg style="left:834px;top:652px;" width="10" height="14" viewBox="0 0 10 14"><path d="M2.4 3.6 L6.4 7 L2.4 10.4" stroke="#505050" stroke-width="1.6" fill="none"/></svg>
<div style="left:78px;top:668px;width:770px;height:26px;background:#f0f0f0;border:1px solid #c8c8c8;border-top:none;box-sizing:border-box;"></div>
<div style="left:79px;top:669px;width:23px;height:23px;background:#d0d0d0;border:2px solid #7a7a7a;box-sizing:border-box;"></div>
<svg style="left:82px;top:672px;" width="19" height="19" viewBox="0 0 19 19"><path d="M2.3 2 H14.7 L10 8.3 V13.3 L7 16 V8.3 Z" stroke="#1c5aa6" stroke-width="1.4" fill="none" stroke-linejoin="miter"/><path d="M12.8 15 H18.2 L15.5 18 Z" fill="#1c5aa6"/></svg>
<div style="left:103px;top:670px;width:1px;height:21px;background:#d0d0d0;"></div>
<svg style="left:107px;top:672px;" width="19" height="18" viewBox="0 0 19 18"><path d="M9.40 1.10 L9.40 16.50 M2.73 4.95 L16.07 12.65 M2.73 12.65 L16.07 4.95 " stroke="#1c5aa6" stroke-width="3.3"/><path d="M9.40 2.20 L9.40 15.40 M3.68 5.50 L15.12 12.10 M3.68 12.10 L15.12 5.50 " stroke="#f0f0f0" stroke-width="1.15"/></svg>
<div class="t" style="left:132.52px;top:674.00px;font-size:12px;line-height:14px;font-weight:400;color:#1b4fa5;">0</div>
<div style="left:146px;top:670px;width:1px;height:21px;background:#d0d0d0;"></div>
<div class="t" style="left:152.44px;top:674.00px;font-size:12px;line-height:14px;font-weight:400;color:#1b4fa5;letter-spacing:0.027px;">Number of records: 1</div>
<div style="left:272px;top:670px;width:1px;height:21px;background:#d0d0d0;"></div>
<div style="left:771px;top:670px;width:1px;height:21px;background:#d0d0d0;"></div>
<div style="left:797px;top:670px;width:1px;height:21px;background:#d0d0d0;"></div>
<svg style="left:777px;top:672px;" width="16" height="17" viewBox="0 0 16 17"><path d="M13.5 2 H2.5 L8.5 8.5 L2.5 15 H13.5" stroke="#1c5aa6" stroke-width="1.3" fill="none"/></svg>
<svg style="left:802px;top:671px;" width="18" height="18" viewBox="0 0 18 18"><path d="M2 15.5 L3 12 L12.5 2.5 L15 5 L5.5 14.5 Z" stroke="#1c5aa6" stroke-width="1.2" fill="none" stroke-linejoin="round"/><path d="M9 15.8 H16.5" stroke="#1c5aa6" stroke-width="1.3"/></svg>
<svg style="left:824px;top:671px;" width="22" height="20" viewBox="0 0 22 20"><rect x="4" y="1.3" width="12" height="11" stroke="#1c5aa6" stroke-width="1.1" fill="none"/><rect x="1.5" y="3.5" width="12.5" height="12" stroke="#1c5aa6" stroke-width="1.3" fill="#f0f0f0"/><path d="M4 7 H5 M6.5 7 H12 M4 10 H5 M6.5 10 H12" stroke="#1c5aa6" stroke-width="1.1"/><circle cx="15.5" cy="14.5" r="4.3" stroke="#1c5aa6" stroke-width="1.2" fill="#fff"/><path d="M15.5 12 V17 M13 14.5 H18" stroke="#1c5aa6" stroke-width="1.2"/></svg>
</body></html>
